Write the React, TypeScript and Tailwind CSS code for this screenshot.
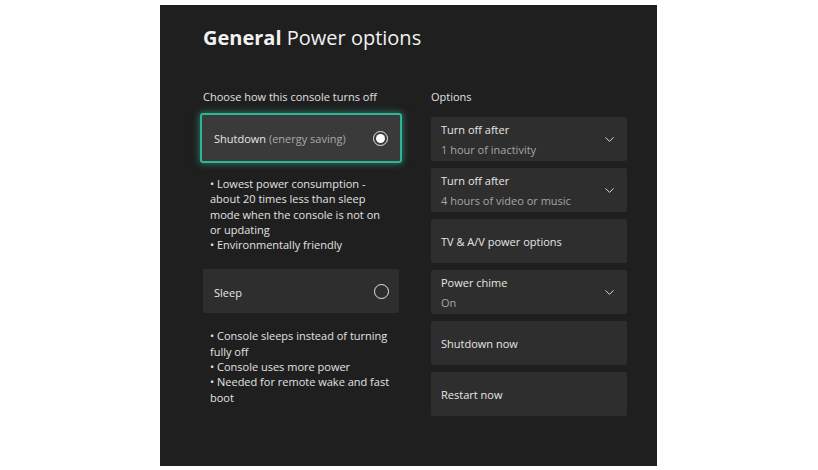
import React from 'react';
import { ChevronDown } from 'lucide-react';

interface OptionRow {
  title: string;
  value?: string;
  dropdown?: boolean;
}

const OPTIONS: OptionRow[] = [
  { title: 'Turn off after', value: '1 hour of inactivity', dropdown: true },
  { title: 'Turn off after', value: '4 hours of video or music', dropdown: true },
  { title: 'TV & A/V power options' },
  { title: 'Power chime', value: 'On', dropdown: true },
  { title: 'Shutdown now' },
  { title: 'Restart now' },
];

function Radio({ checked }: { checked: boolean }) {
  return (
    <span className="w-[15px] h-[15px] rounded-full border-[1.5px] border-[#e6e6e6] flex items-center justify-center">
      {checked && <span className="w-[9px] h-[9px] rounded-full bg-white" />}
    </span>
  );
}

export default function App() {
  return (
    <div
      className="w-[818px] h-[470px] bg-white pt-[5px] pl-[160px]"
      style={{ fontFamily: '"Open Sans", "Noto Sans", sans-serif' }}
    >
      <div className="w-[497px] h-[461px] bg-[#1f1f1f] text-[#e8e8e8] pl-[43px] pt-[19px]">
        <h1 className="text-[20px] leading-[28px] text-[#f2f2f2]">
          <span className="font-bold">General</span> Power options
        </h1>

        <div className="flex mt-[37px] gap-[28px]">
          {/* Left column */}
          <div className="w-[200px]">
            <div className="text-[11px] leading-[16px] text-[#e0e0e0]">Choose how this console turns off</div>

            <div className="mt-[8px] -ml-[3px] w-[202px] h-[50px] rounded-[3px] border-2 border-[#2fb495] bg-[#3a3a3a] shadow-[0_0_6px_1px_rgba(47,180,149,0.55)] flex items-center justify-between pl-[12px] pr-[12px]">
              <span className="pt-[3px] text-[11px] text-[#e6e6e6]">
                Shutdown <span className="text-[#a8a8a8]">(energy saving)</span>
              </span>
              <Radio checked />
            </div>

            <ul className="mt-[13px] pl-[7px] w-[182px] text-[11px] leading-[15.3px] text-[#e2e2e2]">
              <li>• Lowest power consumption - about 20 times less than sleep mode when the console is not on or updating</li>
              <li>• Environmentally friendly</li>
            </ul>

            <div className="mt-[17px] w-[196px] h-[44px] rounded-[2px] bg-[#2e2e2e] flex items-center justify-between pl-[11px] pr-[10px]">
              <span className="pt-[3px] text-[11px] text-[#e6e6e6]">Sleep</span>
              <Radio checked={false} />
            </div>

            <ul className="mt-[15px] pl-[7px] w-[190px] text-[11px] leading-[15.3px] text-[#e2e2e2]">
              <li>• Console sleeps instead of turning fully off</li>
              <li>• Console uses more power</li>
              <li>• Needed for remote wake and fast boot</li>
            </ul>
          </div>

          {/* Right column */}
          <div className="w-[196px]">
            <div className="text-[11px] leading-[16px] text-[#e0e0e0]">Options</div>
            <div className="mt-[12px] flex flex-col gap-[7px]">
              {OPTIONS.map((o, i) => (
                <div
                  key={i}
                  className="h-[44px] rounded-[2px] bg-[#2e2e2e] flex items-center justify-between pl-[10px] pr-[10px]"
                >
                  <div className="flex flex-col pt-[1px]">
                    <span className="text-[11px] leading-[20px] text-[#e6e6e6]">{o.title}</span>
                    {o.value && <span className="text-[11px] leading-[20px] text-[#a6a6a6]">{o.value}</span>}
                  </div>
                  {o.dropdown && <ChevronDown className="w-[15px] h-[15px] text-[#d8d8d8]" strokeWidth={1.6} />}
                </div>
              ))}
            </div>
          </div>
        </div>
      </div>
    </div>
  );
}
